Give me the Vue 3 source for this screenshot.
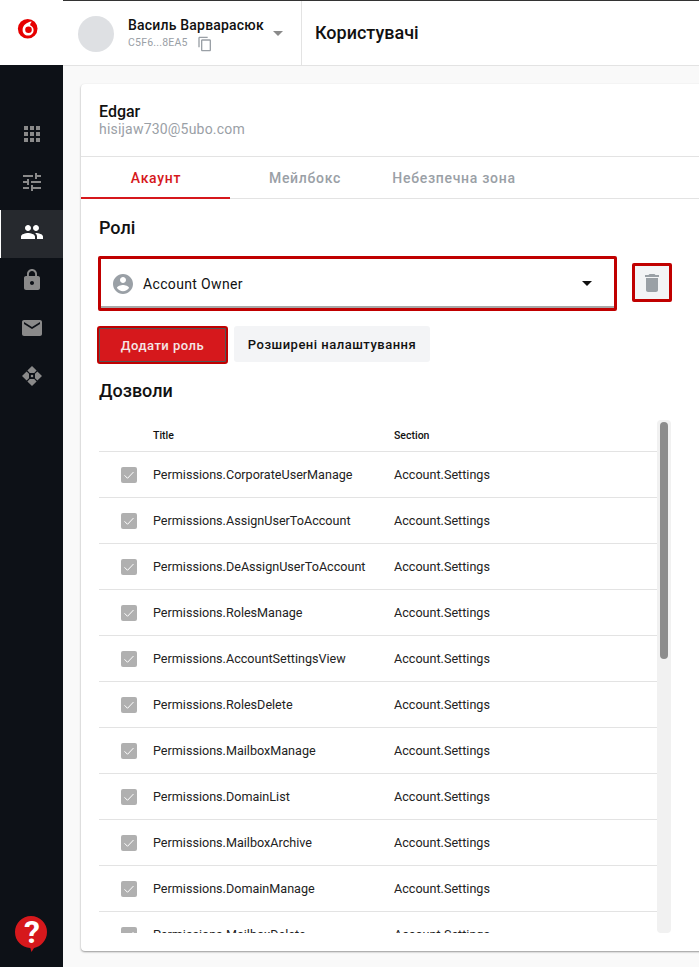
<script setup>
const icons = [
  'M4 8h4V4H4v4zm6 12h4v-4h-4v4zm-6 0h4v-4H4v4zm0-6h4v-4H4v4zm6 0h4v-4h-4v4zm6-10v4h4V4h-4zm-6 4h4V4h-4v4zm6 6h4v-4h-4v4zm0 6h4v-4h-4v4z',
  'M3 17v2h6v-2H3zM3 5v2h10V5H3zm10 16v-2h8v-2h-8v-2h-2v6h2zM7 9v2H3v2h4v2h2V9H7zm14 4v-2H11v2h10zm-6-4h2V7h4V5h-4V3h-2v6z',
  'M16 11c1.66 0 2.99-1.34 2.99-3S17.66 5 16 5c-1.66 0-3 1.34-3 3s1.34 3 3 3zm-8 0c1.66 0 2.99-1.34 2.99-3S9.66 5 8 5C6.34 5 5 6.34 5 8s1.34 3 3 3zm0 2c-2.33 0-7 1.17-7 3.5V19h14v-2.5c0-2.33-4.67-3.5-7-3.5zm8 0c-.29 0-.62.02-.97.05 1.16.84 1.97 1.97 1.97 3.45V19h6v-2.5c0-2.33-4.67-3.5-7-3.5z',
  'M18 8h-1V6c0-2.76-2.24-5-5-5S7 3.24 7 6v2H6c-1.1 0-2 .9-2 2v10c0 1.1.9 2 2 2h12c1.1 0 2-.9 2-2V10c0-1.1-.9-2-2-2zm-6 9c-1.1 0-2-.9-2-2s.9-2 2-2 2 .9 2 2-.9 2-2 2zm3.1-9H8.9V6c0-1.71 1.39-3.1 3.1-3.1 1.71 0 3.1 1.39 3.1 3.1v2z',
  'M20 4H4c-1.1 0-1.99.9-1.99 2L2 18c0 1.1.9 2 2 2h16c1.1 0 2-.9 2-2V6c0-1.1-.9-2-2-2zm0 4l-8 5-8-5V6l8 5 8-5v2z',
  'M12 2l4.600 4.600-2.400 2.400H9.800L7.400 6.600zM12 22l-4.600-4.600 2.400-2.400h4.400l2.400 2.400zM2 12l4.600-4.600L9 9.800v4.400l-2.400 2.400zM22 12l-4.600 4.600L15 14.200V9.800l2.400-2.400zM12 10.700a1.300 1.300 0 1 1 0 2.600 1.300 1.300 0 0 1 0-2.600z'
]
const activeIndex = 2
const tabs = ['Акаунт', 'Мейлбокс', 'Небезпечна зона']
const perms = [
  'CorporateUserManage', 'AssignUserToAccount', 'DeAssignUserToAccount', 'RolesManage',
  'AccountSettingsView', 'RolesDelete', 'MailboxManage', 'DomainList', 'MailboxArchive',
  'DomainManage', 'MailboxDelete'
]
</script>

<template>
  <div class="app">
    <aside class="side">
      <div class="logo">
        <svg width="22" height="22" viewBox="0 0 22 22">
          <circle cx="10.700" cy="10.700" r="9.800" fill="#e60000" />
          <path d="M14.500 3.600c-4.600.5-8.900 3.800-8.900 8.400 0 3.300 2.400 5.600 5.400 5.600 3.100 0 5.600-2.200 5.600-5.300 0-2.900-1.800-4.400-3.500-5 0-1.100.5-2.200 1.400-3.200z" fill="#fff" />
          <circle cx="11.500" cy="11.700" r="3.300" fill="#e60000" />
        </svg>
      </div>
      <nav class="nav">
        <div v-for="(d, i) in icons" :key="i" class="nav-item" :class="{ active: i === activeIndex }">
          <svg width="24" height="24" viewBox="0 0 24 24"><path :d="d" fill="currentColor" /></svg>
        </div>
      </nav>
      <div class="help">
        <svg width="34" height="38" viewBox="0 0 34 38">
          <path d="M17 1a16 16 0 0 1 16 16c0 9-6.500 14.500-13 16l-2.500 4-1.200-4.100C7.500 32.200 1 26 1 17A16 16 0 0 1 17 1z" fill="#d6181c" />
        </svg>
        <span class="help-q">?</span>
      </div>
    </aside>

    <div class="main">
      <header class="top">
        <div class="account">
          <div class="avatar"></div>
          <div class="who">
            <div class="name">Василь Варварасюк</div>
            <div class="id">
              <span>C5F6...8EA5</span>
              <svg width="16" height="16" viewBox="0 0 24 24"><path d="M16 1H4c-1.100 0-2 .9-2 2v14h2V3h12V1zm3 4H8c-1.100 0-2 .9-2 2v14c0 1.100.9 2 2 2h11c1.100 0 2-.9 2-2V7c0-1.100-.9-2-2-2zm0 16H8V7h11v14z" fill="#9aa0a6" /></svg>
            </div>
          </div>
          <span class="caret"></span>
        </div>
        <h1 class="page">Користувачі</h1>
      </header>

      <div class="content">
        <section class="card">
          <div class="head">
            <div class="user">Edgar</div>
            <div class="mail">hisijaw730@5ubo.com</div>
          </div>
          <div class="tabs">
            <div v-for="(t, i) in tabs" :key="t" class="tab" :class="{ on: i === 0 }">{{ t }}</div>
          </div>
          <div class="body">
            <h2 class="title">Ролі</h2>
            <div class="role-row">
              <div class="select">
                <svg width="24" height="24" viewBox="0 0 24 24"><path d="M12 2C6.480 2 2 6.480 2 12s4.480 10 10 10 10-4.480 10-10S17.520 2 12 2zm0 3c1.660 0 3 1.340 3 3s-1.340 3-3 3-3-1.340-3-3 1.340-3 3-3zm0 14.200c-2.500 0-4.710-1.280-6-3.220.03-1.990 4-3.080 6-3.080 1.990 0 5.970 1.090 6 3.080-1.290 1.940-3.500 3.220-6 3.220z" fill="#9aa0a6" /></svg>
                <span class="role">Account Owner</span>
                <span class="caret dark"></span>
              </div>
              <button class="trash" type="button">
                <svg width="24" height="24" viewBox="0 0 24 24"><path d="M6 19c0 1.100.9 2 2 2h8c1.100 0 2-.9 2-2V7H6v12zM19 4h-3.500l-1-1h-5l-1 1H5v2h14V4z" fill="#9aa0a6" /></svg>
              </button>
            </div>
            <div class="buttons">
              <button class="btn primary" type="button">Додати роль</button>
              <button class="btn plain" type="button">Розширені налаштування</button>
            </div>
            <h2 class="title perms-title">Дозволи</h2>
            <div class="scroller">
              <div class="table">
                <div class="row hdr"><span class="c1"></span><span class="c2">Title</span><span>Section</span></div>
                <div v-for="p in perms" :key="p" class="row">
                  <span class="c1">
                    <span class="check">
                      <svg width="16" height="16" viewBox="0 0 16 16"><path d="M3.500 8.300l3 3 6-6.300" fill="none" stroke="#fff" stroke-width="1" /></svg>
                    </span>
                  </span>
                  <span class="c2">Permissions.{{ p }}</span>
                  <span>Account.Settings</span>
                </div>
              </div>
              <div class="track"><div class="thumb"></div></div>
            </div>
          </div>
        </section>
      </div>
    </div>
  </div>
</template>

<style>
html, body { margin: 0; background: #f9f9f9; }
</style>

<style scoped>
.app {
  display: flex;
  width: 699px;
  height: 967px;
  overflow: hidden;
  font-family: Roboto, "Liberation Sans", sans-serif;
  color: #111;
}
.side {
  width: 63px;
  flex: none;
  background: #0d1117;
  display: flex;
  flex-direction: column;
}
.logo {
  height: 65px;
  background: #fff;
  display: flex;
  align-items: flex-start;
  justify-content: center;
  padding-top: 18px;
  padding-right: 7px;
  box-sizing: border-box;
}
.nav { padding-top: 47px; display: flex; flex-direction: column; }
.nav-item {
  height: 48px;
  box-sizing: border-box;
  padding-top: 10px;
  display: flex;
  justify-content: center;
  color: #8a8a8a;
}
.nav-item.active {
  margin-top: 2px;
  background: #26292e;
  color: #fff;
  box-shadow: inset 1px 0 0 #fff;
}
.help { margin-top: auto; padding: 0 0 14px 14px; line-height: 0; position: relative; }
.help-q {
  position: absolute;
  left: 14px;
  top: -2px;
  width: 36px;
  text-align: center;
  font-size: 32px;
  font-weight: 700;
  line-height: 38px;
  color: #fff;
}
.main { flex: 1; min-width: 0; display: flex; flex-direction: column; }
.top {
  height: 66px;
  flex: none;
  box-sizing: border-box;
  background: #fff;
  border-top: 1px solid #333;
  border-bottom: 1px solid #e3e3e3;
  display: flex;
  align-items: stretch;
}
.account {
  width: 239px;
  box-sizing: border-box;
  border-right: 1px solid #e3e3e3;
  padding: 15px 0 0 15px;
  display: flex;
  align-items: flex-start;
  position: relative;
}
.avatar { width: 36px; height: 36px; border-radius: 50%; background: #dee0e3; flex: none; }
.who { margin-left: 14px; }
.name { font-size: 14px; font-weight: 500; line-height: 18px; letter-spacing: .2px; }
.id {
  display: flex;
  align-items: flex-start;
  gap: 9px;
  font-size: 10.500px;
  line-height: 14px;
  color: #9aa0a6;
  margin-top: 2px;
  letter-spacing: .2px;
}
.caret {
  width: 0;
  height: 0;
  border-left: 5px solid transparent;
  border-right: 5px solid transparent;
  border-top: 5px solid #8a8a8a;
}
.account .caret { position: absolute; left: 210px; top: 30px; }
.page { margin: 0 0 0 13px; font-size: 18px; font-weight: 500; line-height: 64px; }
.content { flex: 1; padding: 18px 0 0 18px; }
.card {
  width: 640px;
  height: 867px;
  box-sizing: border-box;
  background: #fff;
  border-radius: 4px;
  box-shadow: 0 1px 2px rgba(0,0,0,.4);
}
.head { height: 73px; box-sizing: border-box; padding: 19px 0 0 18px; border-bottom: 1px solid #e3e3e3; }
.user { font-size: 16px; font-weight: 500; line-height: 18px; }
.mail { font-size: 14px; line-height: 17px; color: #9aa0a6; letter-spacing: .2px; }
.tabs { height: 42px; box-sizing: border-box; display: flex; border-bottom: 1px solid #e3e3e3; }
.tab {
  width: 149px;
  height: 41px;
  box-sizing: border-box;
  padding: 1px 0 0 1px;
  line-height: 41px;
  text-align: center;
  font-size: 14px;
  font-weight: 500;
  letter-spacing: .7px;
  color: #9aa0a6;
}
.tab.on { color: #d6181c; border-bottom: 2px solid #d6181c; height: 42px; }
.body { padding: 19px 0 0 18px; }
.title { margin: 0; font-size: 18px; font-weight: 500; line-height: 20px; }
.role-row { display: flex; align-items: flex-start; margin-top: 18px; }
.select {
  width: 519px;
  height: 55px;
  margin-left: -1px;
  box-sizing: border-box;
  border: 3px solid #c00000;
  border-radius: 2px;
  box-shadow: inset 0 -2px 0 #a8a8a8;
  display: flex;
  align-items: center;
  padding: 0 22px 0 10px;
}
.role { margin-left: 8px; font-size: 14px; letter-spacing: .35px; flex: 1; }
.caret.dark { border-top-color: #111; }
.trash {
  width: 40px;
  height: 39px;
  margin: 7px 0 0 15px;
  padding: 0;
  box-sizing: border-box;
  border: 3px solid #c00000;
  border-radius: 2px;
  background: #f3f4f6;
  display: flex;
  align-items: center;
  justify-content: center;
}
.buttons { display: flex; align-items: flex-start; gap: 6px; margin: 15px 0 0 -2px; }
.btn {
  font-family: inherit;
  font-size: 13px;
  font-weight: 500;
  letter-spacing: .5px;
  border-radius: 3px;
  padding: 0;
  cursor: pointer;
}
.primary {
  width: 131px;
  height: 38px;
  background: #d6181c;
  color: #f4e6e6;
  border: 2px solid #c00000;
  box-shadow: inset 0 0 0 1px #555;
}
.plain { width: 196px; height: 36px; background: #f3f4f6; border: 0; color: #111; }
.perms-title { margin-top: 17px; }
.scroller { display: flex; height: 513px; margin-top: 19px; overflow: hidden; }
.table { width: 558px; flex: none; }
.row {
  height: 46px;
  box-sizing: border-box;
  border-bottom: 1px solid #e3e3e3;
  display: flex;
  align-items: center;
  font-size: 12.600px;
  color: #222;
}
.row.hdr { height: 32px; font-size: 10.500px; font-weight: 500; color: #111; }
.c1 { width: 54px; flex: none; display: flex; padding-left: 22px; box-sizing: border-box; }
.c2 { width: 241px; flex: none; }
.check { width: 16px; height: 16px; background: #b0b0b0; border-radius: 2px; display: block; line-height: 0; }
.track {
  width: 14px;
  flex: none;
  background: #f1f1f1;
  border-radius: 4px;
  box-sizing: border-box;
  padding: 2px 3px 0;
}
.thumb { height: 237px; background: #8c8c8c; border-radius: 4px; }
</style>
